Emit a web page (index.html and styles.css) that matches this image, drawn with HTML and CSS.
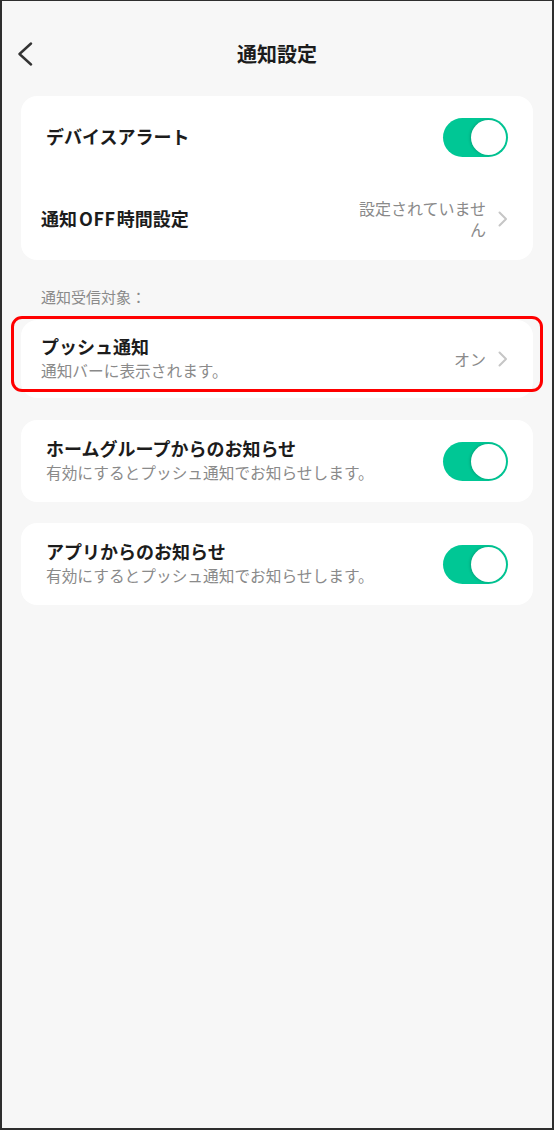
FILE: index.html
```html
<!DOCTYPE html>
<html lang="ja">
<head>
<meta charset="utf-8">
<title>通知設定</title>
<link rel="stylesheet" href="styles.css">
</head>
<body>
<div class="screen">
  <header class="topbar">
    <button class="back" aria-label="戻る">
      <svg width="16" height="24" viewBox="0 0 16 24"><path d="M14 1.5 L2.5 12 L14 22.5" fill="none" stroke="#333" stroke-width="2.4" stroke-linecap="round" stroke-linejoin="round"/></svg>
    </button>
    <h1 class="title">通知設定</h1>
    <span></span>
  </header>

  <section class="card">
    <div class="row">
      <span class="row-title">デバイスアラート</span>
      <span class="toggle on"><span class="knob"></span></span>
    </div>
    <div class="row row-narrow">
      <span class="row-title">通知<span class="latin">OFF</span>時間設定</span>
      <span class="value-group">
        <span class="value value-wrap">設定されていません</span>
        <svg class="chev" width="10" height="16" viewBox="0 0 10 16"><path d="M1.5 1.5 L8 8 L1.5 14.5" fill="none" stroke="#c6c6c6" stroke-width="2" stroke-linecap="round" stroke-linejoin="round"/></svg>
      </span>
    </div>
  </section>

  <p class="section-label">通知受信対象：</p>

  <section class="card card-push">
    <div class="row row-narrow row-push">
      <div class="text-stack">
        <span class="row-title">プッシュ通知</span>
        <span class="row-sub">通知バーに表示されます。</span>
      </div>
      <span class="value-group">
        <span class="value">オン</span>
        <svg class="chev" width="10" height="16" viewBox="0 0 10 16"><path d="M1.5 1.5 L8 8 L1.5 14.5" fill="none" stroke="#c6c6c6" stroke-width="2" stroke-linecap="round" stroke-linejoin="round"/></svg>
      </span>
    </div>
    <div class="highlight"></div>
  </section>

  <section class="card card-gap">
    <div class="row">
      <div class="text-stack">
        <span class="row-title">ホームグループからのお知らせ</span>
        <span class="row-sub">有効にするとプッシュ通知でお知らせします。</span>
      </div>
      <span class="toggle on"><span class="knob"></span></span>
    </div>
  </section>

  <section class="card card-gap2">
    <div class="row">
      <div class="text-stack">
        <span class="row-title">アプリからのお知らせ</span>
        <span class="row-sub">有効にするとプッシュ通知でお知らせします。</span>
      </div>
      <span class="toggle on"><span class="knob"></span></span>
    </div>
  </section>
</div>
</body>
</html>
```

FILE: styles.css
```css
* { box-sizing: border-box; }

html, body {
  margin: 0;
  padding: 0;
}

body {
  font-family: "Noto Sans CJK JP", "Noto Sans", sans-serif;
  color: #1c1c1c;
  background: #f7f7f7;
}

.screen {
  width: 554px;
  height: 1130px;
  background: #f7f7f7;
  border-style: solid;
  border-color: #2e2e2e;
  border-width: 1px 2px 2px 2px;
  padding: 0 19px;
  overflow: hidden;
}

.topbar {
  display: grid;
  grid-template-columns: 40px 1fr 40px;
  align-items: center;
  height: 60px;
  margin: 23px -6px 0;
}

.back {
  background: none;
  border: 0;
  padding: 0 0 0 2px;
  margin: 0;
  display: flex;
  align-items: center;
  height: 30px;
  cursor: pointer;
}

.title {
  margin: 0;
  text-align: center;
  font-size: 20px;
  font-weight: 700;
  line-height: 28px;
  color: #1c1c1c;
}

.card {
  background: #ffffff;
  border-radius: 16px;
  margin-top: 12px;
}

.card-push {
  position: relative;
  margin-top: 0;
}

.card-gap { margin-top: 22px; }
.card-gap2 { margin-top: 21px; }

.row {
  display: flex;
  align-items: center;
  justify-content: space-between;
  height: 82px;
  padding: 0 25px;
}

.row-narrow { padding-left: 20px; }

.row-push { height: 78px; }

.row-title {
  font-size: 18px;
  font-weight: 700;
  line-height: 24px;
  color: #1c1c1c;
  padding-bottom: 2px;
}

.latin {
  letter-spacing: 0.6px;
  margin: 0 1px 0 2px;
}

.text-stack {
  display: flex;
  flex-direction: column;
  padding-bottom: 3px;
}

.text-stack .row-title { padding-bottom: 0; }

.row-sub {
  font-size: 15.7px;
  line-height: 22px;
  margin-top: 2px;
  color: #8a8a8a;
}

.value-group {
  display: flex;
  align-items: center;
  gap: 12px;
}

.value {
  font-size: 16px;
  line-height: 21px;
  color: #8a8a8a;
  text-align: right;
}

.value-wrap {
  width: 130px;
}

.chev { display: block; }

.toggle {
  display: flex;
  align-items: center;
  justify-content: flex-end;
  width: 65px;
  height: 39px;
  border-radius: 20px;
  background: #00c795;
  padding: 0 2px;
}

.knob {
  width: 35px;
  height: 35px;
  border-radius: 50%;
  background: #ffffff;
  box-shadow: -1px 0 3px rgba(0, 0, 0, 0.18);
}

.section-label {
  margin: 27px 0 13px;
  padding-left: 20px;
  font-size: 15px;
  line-height: 20px;
  color: #8a8a8a;
}

.highlight {
  position: absolute;
  top: -4px;
  left: -10px;
  right: -10px;
  bottom: 6px;
  border: 3.5px solid #ff0000;
  border-radius: 11px;
  pointer-events: none;
}
```
